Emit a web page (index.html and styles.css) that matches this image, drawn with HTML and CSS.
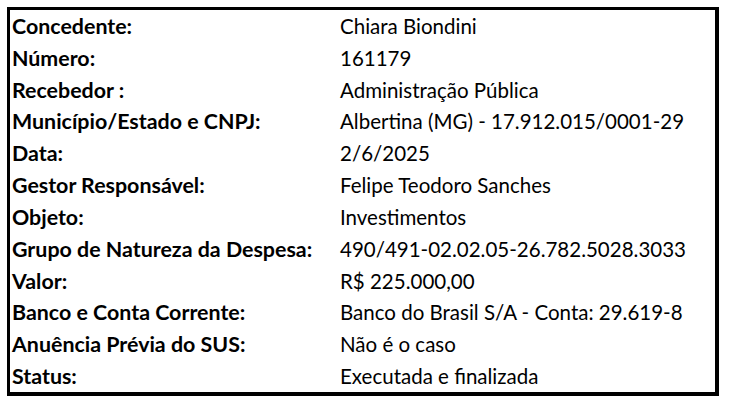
FILE: index.html
```html
<!DOCTYPE html>
<html lang="pt-BR">
<head>
<meta charset="utf-8">
<link rel="stylesheet" href="styles.css">
</head>
<body>
<div class="sheet">
  <div class="row"><div class="label">Concedente:</div><div class="value">Chiara Biondini</div></div>
  <div class="row"><div class="label">Número:</div><div class="value">161179</div></div>
  <div class="row"><div class="label">Recebedor :</div><div class="value">Administração Pública</div></div>
  <div class="row"><div class="label">Município/Estado e CNPJ:</div><div class="value">Albertina (MG) - 17.912.015/0001-29</div></div>
  <div class="row"><div class="label">Data:</div><div class="value">2/6/2025</div></div>
  <div class="row"><div class="label">Gestor Responsável:</div><div class="value">Felipe Teodoro Sanches</div></div>
  <div class="row"><div class="label">Objeto:</div><div class="value">Investimentos</div></div>
  <div class="row"><div class="label">Grupo de Natureza da Despesa:</div><div class="value">490/491-02.02.05-26.782.5028.3033</div></div>
  <div class="row"><div class="label">Valor:</div><div class="value">R$ 225.000,00</div></div>
  <div class="row"><div class="label">Banco e Conta Corrente:</div><div class="value">Banco do Brasil S/A - Conta: 29.619-8</div></div>
  <div class="row"><div class="label">Anuência Prévia do SUS:</div><div class="value">Não é o caso</div></div>
  <div class="row"><div class="label">Status:</div><div class="value">Executada e finalizada</div></div>
</div>
</body>
</html>
```
FILE: styles.css
```css
html, body {
  margin: 0;
  padding: 0;
  background: #fff;
}
body {
  padding: 7px 0 0 7px;
  font-family: Lato, "Liberation Sans", sans-serif;
  color: #000;
}
.sheet {
  width: 705px;
  height: 382px;
  border-top: 3px solid #000;
  border-left: 3px solid #000;
  border-right: 4px solid #000;
  border-bottom: 4px solid #000;
  display: flex;
  flex-direction: column;
}
.row {
  flex: 1;
  display: grid;
  grid-template-columns: 330px 1fr;
  align-items: baseline;
  padding-top: 3px;
}
.label {
  font-size: 21.4px;
  font-weight: 700;
  padding-left: 2px;
  white-space: nowrap;
}
.value {
  font-size: 20.5px;
  white-space: nowrap;
}
```
